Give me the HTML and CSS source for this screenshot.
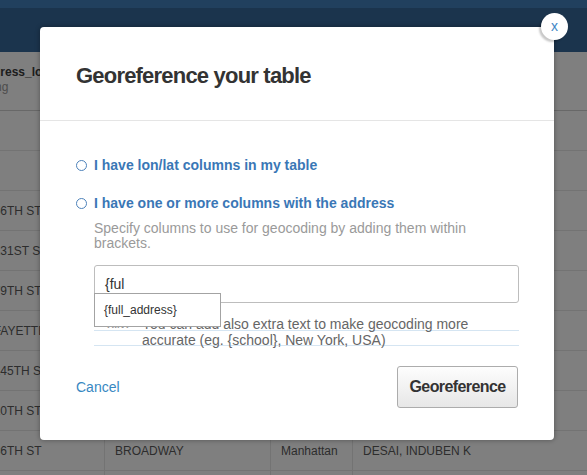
FILE: index.html
```html
<!DOCTYPE html>
<html>
<head>
<meta charset="utf-8">
<link rel="stylesheet" href="styles.css">
</head>
<body>
<div class="page">
  <header class="topbar"><div class="topstrip"></div></header>
  <div class="table">
    <div class="row thead">
      <div class="cell"><span class="colname">address_location</span><span class="coltype">string</span></div>
      <div class="cell"></div><div class="cell"></div><div class="cell"></div>
    </div>
    <div class="row"><div class="cell"></div><div class="cell"></div><div class="cell"></div><div class="cell"></div></div>
    <div class="row"><div class="cell"></div><div class="cell"></div><div class="cell"></div><div class="cell"></div></div>
    <div class="row"><div class="cell">W 56TH ST</div><div class="cell"></div><div class="cell"></div><div class="cell"></div></div>
    <div class="row"><div class="cell">W 131ST ST</div><div class="cell"></div><div class="cell"></div><div class="cell"></div></div>
    <div class="row"><div class="cell">W 79TH ST</div><div class="cell"></div><div class="cell"></div><div class="cell"></div></div>
    <div class="row"><div class="cell">LAFAYETTE ST</div><div class="cell"></div><div class="cell"></div><div class="cell"></div></div>
    <div class="row"><div class="cell">W 145TH ST</div><div class="cell"></div><div class="cell"></div><div class="cell"></div></div>
    <div class="row"><div class="cell">W 10TH ST</div><div class="cell"></div><div class="cell"></div><div class="cell"></div></div>
    <div class="row"><div class="cell">W 86TH ST</div><div class="cell">BROADWAY</div><div class="cell">Manhattan</div><div class="cell">DESAI, INDUBEN K</div></div>
    <div class="row"><div class="cell"></div><div class="cell"></div><div class="cell"></div><div class="cell"></div></div>
  </div>
</div>
<div class="overlay"></div>
<div class="modal">
  <button class="close">x</button>
  <div class="modal-head">
    <h1 class="title">Georeference your table</h1>
  </div>
  <div class="modal-body">
    <label class="option"><span class="radio"></span><span>I have lon/lat columns in my table</span></label>
    <label class="option second"><span class="radio"></span><span>I have one or more columns with the address</span></label>
    <div class="indent">
      <p class="desc">Specify columns to use for geocoding by adding them within brackets.</p>
      <div class="field">
        <div class="input">{ful</div>
        <ul class="suggest"><li>{full_address}</li></ul>
      </div>
      <div class="hint">
        <span class="hint-label">HINT</span>
        <p class="hint-text">You can add also extra text to make geocoding more accurate (eg. {school}, New York, USA)</p>
      </div>
    </div>
  </div>
  <div class="modal-foot">
    <a class="cancel" href="#">Cancel</a>
    <button class="primary">Georeference</button>
  </div>
</div>
</body>
</html>
```
FILE: styles.css
```css
html, body {
  margin: 0;
  padding: 0;
  width: 587px;
  height: 475px;
  overflow: hidden;
  background: #fff;
  font-family: "Liberation Sans", Arial, sans-serif;
}
.page {
  width: 587px;
  height: 475px;
  overflow: hidden;
}
.topbar {
  height: 52px;
  background: #36689a;
}
.topstrip {
  height: 8px;
  background: #4280bc;
}
.table {
  margin-left: -31px;
}
.row {
  display: grid;
  grid-template-columns: 136px 166px 82px 300px;
  height: 40px;
  border-bottom: 1px solid #e6e6e6;
  box-sizing: border-box;
}
.row.thead {
  height: 59px;
  border-bottom: 1px solid #d0d0d0;
}
.cell {
  border-right: 1px solid #e6e6e6;
  padding: 0 10px;
  display: flex;
  flex-direction: column;
  justify-content: center;
  font-size: 12px;
  color: #5a5a5a;
  white-space: nowrap;
  overflow: hidden;
}
.thead .cell {
  justify-content: flex-start;
  padding-top: 13px;
}
.colname {
  font-weight: bold;
  font-size: 12px;
  color: #3a3a3a;
  line-height: 15px;
}
.coltype {
  font-size: 12px;
  color: #999;
  line-height: 15px;
}
.overlay {
  position: absolute;
  left: 0;
  top: 0;
  width: 587px;
  height: 475px;
  background: rgba(0, 0, 0, 0.5);
}
.modal {
  position: absolute;
  left: 40px;
  top: 27px;
  width: 514px;
  height: 413px;
  background: #fff;
  border-radius: 4px;
  box-shadow: 0 0 4px 1px rgba(0, 0, 0, 0.25);
  box-sizing: border-box;
  display: flex;
  flex-direction: column;
}
.close {
  position: absolute;
  right: -14px;
  top: -14px;
  width: 27px;
  height: 27px;
  border-radius: 50%;
  border: none;
  background: #fff;
  box-shadow: -2px 2px 2px rgba(0, 0, 0, 0.22);
  color: #3f87c6;
  font-family: "Liberation Sans", Arial, sans-serif;
  font-size: 14px;
  line-height: 27px;
  padding: 0 0 2px 0;
  text-align: center;
}
.modal-head {
  padding: 36px 36px 31px;
  border-bottom: 1px solid #e5e5e5;
}
.title {
  margin: 0;
  font-size: 22px;
  line-height: 26px;
  font-weight: bold;
  letter-spacing: -0.8px;
  color: #333;
}
.modal-body {
  padding: 36px 35px 0 36px;
}
.option {
  display: flex;
  align-items: center;
  gap: 7px;
  font-size: 14px;
  line-height: 16px;
  font-weight: bold;
  color: #3a77b6;
}
.option.second {
  margin-top: 22px;
}
.radio {
  width: 9px;
  height: 9px;
  border: 1px solid #4d82ba;
  border-radius: 50%;
  flex: none;
  margin-top: 1px;
}
.indent {
  margin-left: 18px;
}
.desc {
  margin: 10px 0 0;
  font-size: 14px;
  line-height: 15px;
  color: #9a9a9a;
}
.field {
  position: relative;
  margin-top: 14px;
}
.input {
  height: 36px;
  border: 1px solid #bdbdbd;
  border-radius: 3px;
  padding: 0 10px;
  font-size: 14px;
  line-height: 36px;
  color: #333;
}
.suggest {
  position: absolute;
  left: 0;
  top: 28px;
  width: 125px;
  height: 32px;
  margin: 0;
  padding: 0;
  list-style: none;
  background: #fff;
  border: 1px solid #a3a3a3;
  z-index: 2;
}
.suggest li {
  padding-left: 9px;
  font-size: 12px;
  line-height: 32px;
  color: #333;
}
.hint {
  display: flex;
  margin-top: 13px;
  background-image: linear-gradient(#d5e5f2, #d5e5f2), linear-gradient(#d5e5f2, #d5e5f2);
  background-size: 100% 1px, 100% 1px;
  background-position: 0 14px, 0 29px;
  background-repeat: no-repeat;
}
.hint-label {
  width: 35px;
  padding-left: 13px;
  flex: none;
  font-size: 10px;
  line-height: 16px;
  padding-top: 1px;
  font-weight: bold;
  color: #999;
}
.hint-text {
  margin: 0;
  font-size: 14px;
  line-height: 16px;
  color: #666;
}
.modal-foot {
  margin-top: auto;
  padding: 0 36px 32px;
  display: flex;
  justify-content: space-between;
  align-items: center;
}
.cancel {
  font-size: 14px;
  color: #3888c2;
  text-decoration: none;
  margin-bottom: 1px;
}
.primary {
  width: 121px;
  height: 42px;
  border: 1px solid #acacac;
  border-radius: 3px;
  background: linear-gradient(#fdfdfd, #e7e7e7);
  font-family: "Liberation Sans", Arial, sans-serif;
  font-size: 16px;
  font-weight: bold;
  letter-spacing: -0.6px;
  color: #333;
  padding: 0;
}
```
